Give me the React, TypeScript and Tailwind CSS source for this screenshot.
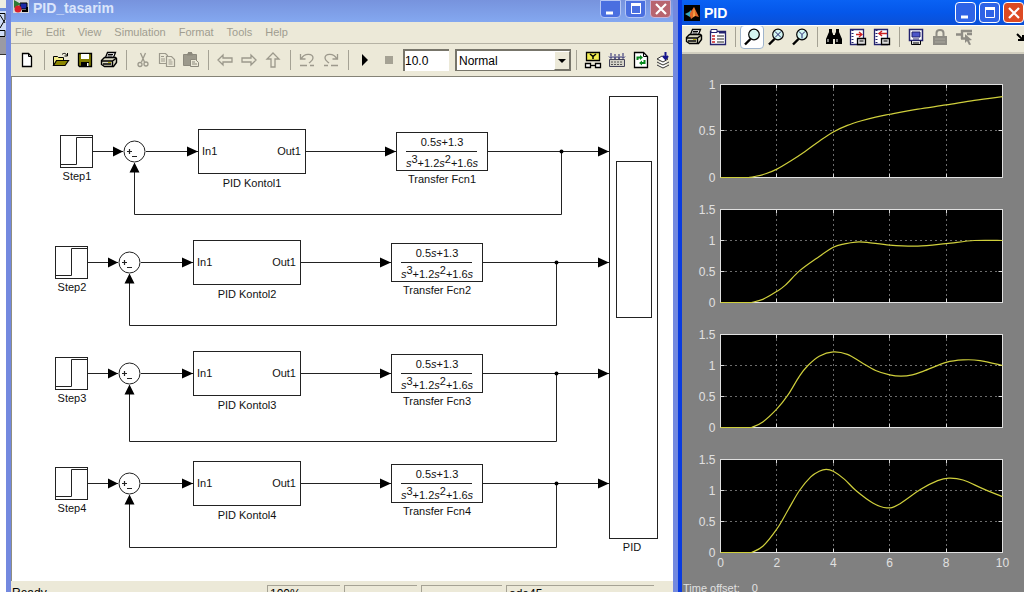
import React from "react";

type Point = [number, number];

interface ToolProps {
  label: string;
  active?: boolean;
  children: React.ReactNode;
}

interface LoopProps {
  n: number;
  x: number;
  y: number;
  back: number;
}

interface PlotProps {
  top: number;
  max: number;
  data: Point[];
  showTime?: boolean;
}

const menus = ["File", "Edit", "View", "Simulation", "Format", "Tools", "Help"];

// one entry for each feedback loop, back is the height of the return wire
const loops: LoopProps[] = [
  { n: 1, x: 5, y: 74.5, back: 137.5 },
  { n: 2, x: 0, y: 185.5, back: 248.5 },
  { n: 3, x: 0, y: 296.5, back: 364.5 },
  { n: 4, x: 0, y: 406.5, back: 470.5 },
];

const plots: PlotProps[] = [
  {
    top: 30.5,
    max: 1,
    data: [[0, 0], [1, 0], [1.2, 0.01], [1.6, 0.04], [2, 0.09], [2.5, 0.18], [3, 0.28], [3.5, 0.39], [4, 0.49], [4.5, 0.56], [5, 0.61], [5.5, 0.65], [6, 0.68], [7, 0.735], [8, 0.78], [9, 0.83], [10, 0.87]],
  },
  {
    top: 155.5,
    max: 1.5,
    data: [[0, 0], [1.1, 0], [1.5, 0.05], [2, 0.18], [2.3, 0.28], [2.8, 0.51], [3.4, 0.71], [4, 0.89], [4.4, 0.945], [4.8, 0.975], [5.2, 0.97], [6, 0.925], [7, 0.91], [8, 0.95], [9, 1], [10, 1]],
  },
  {
    top: 280.5,
    max: 1.5,
    data: [[0, 0], [1.1, 0], [1.5, 0.09], [2, 0.3], [2.4, 0.53], [2.8, 0.83], [3.1, 1], [3.5, 1.15], [4, 1.22], [4.5, 1.18], [5, 1.05], [5.5, 0.92], [6, 0.85], [6.4, 0.83], [6.8, 0.85], [7.2, 0.91], [8, 1.05], [8.6, 1.09], [9.2, 1.08], [10, 1]],
  },
  {
    top: 405.5,
    max: 1.5,
    data: [[0, 0], [1.1, 0], [1.5, 0.1], [2, 0.38], [2.4, 0.69], [2.8, 1], [3.2, 1.22], [3.5, 1.31], [3.75, 1.34], [4, 1.31], [4.4, 1.18], [4.8, 1], [5.4, 0.8], [5.9, 0.72], [6.3, 0.77], [7.1, 1.02], [7.7, 1.16], [8.1, 1.2], [8.6, 1.17], [9.3, 1.03], [10, 0.9]],
    showTime: true,
  },
];

const Tool: React.FC<ToolProps> = ({ label, active, children }) => (
  <button
    type="button"
    aria-label={label}
    className={`flex h-6 w-6 shrink-0 items-center justify-center ${
      active ? "rounded border border-[#9fb4cc] bg-white" : ""
    }`}
  >
    <svg viewBox="0 0 18 18" className="h-[18px] w-[18px] shrink-0" fill="none" stroke="#000">
      {children}
    </svg>
  </button>
);

const Separator = () => (
  <div className="flex w-2.5 shrink-0 justify-center">
    <div className="h-5 w-px bg-[#a5a294]" />
  </div>
);

const Printer = () => (
  <>
    <path d="M5.5 6.5 7.5 1.5h8l-2 5" fill="#fff" strokeWidth="1.3" />
    <path d="M8 3.5h5M7.5 5h5" />
    <path d="M1.5 9.5 4.5 6.5h11l1 1v4l-3 4h-9l-3-2z" fill="#d8d6c0" strokeWidth="1.4" />
    <path d="M1.5 10h11l4-3M12.5 10v5M3 13h8" strokeWidth="1.4" />
    <path d="M8 11.5h3" stroke="#b3a800" />
  </>
);

const Lens = () => (
  <>
    <path d="M7.5 11 2 16.5" strokeWidth="2.4" />
    <circle cx="11" cy="6.5" r="5.3" fill="#d3f5f0" strokeWidth="1.2" />
  </>
);

const WindowButtons = ({ dim }: { dim?: boolean }) => {
  const size = dim ? "h-[18px] rounded-b" : "h-[21px] rounded";
  const blue = dim ? "border-[#b4c6f5] bg-[#4a6fe0]" : "border-white bg-[#2e63e6]";
  const red = dim ? "border-[#c9b4d8] bg-[#b8646f]" : "border-white bg-[#dd4a23]";
  return (
    <div className={`ml-auto flex shrink-0 ${dim ? "gap-1 pr-0.5" : "gap-[3px]"}`}>
      <button type="button" aria-label="Minimize" className={`flex w-[21px] items-center justify-center border ${size} ${blue}`}>
        <svg viewBox="0 0 14 14" className="h-3.5 w-3.5"><path d="M2 11h7" stroke="#fff" strokeWidth="3" /></svg>
      </button>
      <button type="button" aria-label="Maximize" className={`flex w-[21px] items-center justify-center border ${size} ${blue}`}>
        <svg viewBox="0 0 14 14" className="h-3.5 w-3.5" fill="none" stroke="#fff"><path d="M2 2.5h10" strokeWidth="3" /><path d="M2.5 2v9.500h9V2" /></svg>
      </button>
      <button type="button" aria-label="Close" className={`flex w-[21px] items-center justify-center border ${size} ${red}`}>
        <svg viewBox="0 0 14 14" className="h-3.5 w-3.5" stroke="#fff" strokeWidth="2.2"><path d="M2 2l10 10M12 2 2 12" /></svg>
      </button>
    </div>
  );
};

const Loop: React.FC<LoopProps> = ({ n, x, y, back }) => (
  <g transform={`translate(${x} ${y})`}>
    {/* wires */}
    <path d="M76 0h30M129 0h52M289 0h90" stroke="#222" />
    <path d={`M471 0H${597 - x}M544.5 0V${back - y}H117.5V12`} stroke="#222" />
    <g fill="#000" stroke="none">
      <path d="M96 -5v10l10-5zM170 -5v10l11-5zM368 -5v10l11-5zM112.5 21h10l-5-10z" />
      <path d={`M${586 - x} -5v10l11-5z`} />
      <circle cx="544.5" cy="0" r="2" />
    </g>

    {/* step source */}
    <rect x="43.5" y="-16" width="32" height="32" />
    <path d="M44 13h15.500v-27H76" />

    {/* sum */}
    <circle cx="117.5" cy="0" r="10.5" />
    <path d="M110 0h5M112.5 -2.5v5M115 5h5" strokeWidth="1.2" />

    <rect x="181.5" y="-22" width="107" height="44" />
    <rect x="379.5" y="-19" width="91" height="38" />
    <path d="M389 0h71" />

    <g fill="#111" stroke="none">
      <text x="60" y="28" textAnchor="middle">Step{n}</text>
      <text x="185" y="3">In1</text>
      <text x="284" y="3" textAnchor="end">Out1</text>
      <text x="235" y="35" textAnchor="middle">PID Kontol{n}</text>
      <text x="425" y="-6" textAnchor="middle">
        0.5<tspan fontStyle="italic">s</tspan>+1.3
      </text>
      <text x="425" y="15" textAnchor="middle">
        <tspan fontStyle="italic">s</tspan><tspan dy="-4">3</tspan><tspan dy="4">+1.2</tspan><tspan fontStyle="italic">s</tspan><tspan dy="-4">2</tspan><tspan dy="4">+1.6</tspan><tspan fontStyle="italic">s</tspan>
      </text>
      <text x="425" y="31" textAnchor="middle">Transfer Fcn{n}</text>
    </g>
  </g>
);

const LEFT = 38.5;
const WIDTH = 282;
const HEIGHT = 93;

const curve = (data: Point[], max: number) => {
  const p = data.map(([t, v]) => [(t / 10) * WIDTH, HEIGHT - (v / max) * HEIGHT]);
  let d = `M${p[0][0]} ${p[0][1]}`;
  for (let i = 0; i < p.length - 1; i++) {
    const a = p[Math.max(i - 1, 0)];
    const b = p[i];
    const c = p[i + 1];
    const e = p[Math.min(i + 2, p.length - 1)];
    // the flat start would overshoot with the wide tangent, so keep it straight
    if (i === 0) {
      d += `L${c[0]} ${c[1]}`;
      continue;
    }
    const from = i === 1 ? b : a;
    d += `C${b[0] + (c[0] - from[0]) / 6} ${b[1] + (c[1] - from[1]) / 6} ${c[0] - (e[0] - b[0]) / 6} ${c[1] - (e[1] - b[1]) / 6} ${c[0]} ${c[1]}`;
  }
  return d;
};

const Plot: React.FC<PlotProps> = ({ top, max, data, showTime }) => {
  const levels = max === 1 ? [0, 0.5, 1] : [0, 0.5, 1, 1.5];
  return (
    <g transform={`translate(${LEFT} ${top})`}>
      <rect width={WIDTH} height={HEIGHT} fill="#000" />
      {[2, 4, 6, 8].map((t) => {
        const x = Math.round((t / 10) * WIDTH);
        return (
          <g key={t} stroke="#d8d8d8">
            <path d={`M${x} 0V${HEIGHT}`} strokeDasharray="1 4" />
            <path d={`M${x} 0v4M${x} ${HEIGHT}v-4`} />
          </g>
        );
      })}
      {levels.map((v) => {
        const y = HEIGHT - Math.round((v / max) * HEIGHT);
        return (
          <g key={v}>
            {v > 0 && v < max && (
              <g stroke="#d8d8d8">
                <path d={`M0 ${y}H${WIDTH}`} strokeDasharray="1 4" />
                <path d={`M0 ${y}h4M${WIDTH} ${y}h-4`} />
              </g>
            )}
            <text x="-5" y={y + 4} textAnchor="end">{v}</text>
          </g>
        );
      })}
      <rect width={WIDTH} height={HEIGHT} fill="none" stroke="#e0e0e0" />
      <path d={curve(data, max)} fill="none" stroke="#cfcf3c" strokeWidth="1.2" />
      {showTime &&
        [0, 2, 4, 6, 8, 10].map((t) => (
          <text key={t} x={(t / 10) * WIDTH} y={HEIGHT + 14} textAnchor="middle">{t}</text>
        ))}
    </g>
  );
};

const ModelWindow = () => (
  <section className="flex min-w-0 flex-1 flex-col border-x-[5px] border-[#7389df] bg-[#ece9d8]">
    <header className="flex h-[22px] shrink-0 items-start gap-1 bg-gradient-to-b from-[#7793dd] to-[#84a8f0]">
      <svg viewBox="0 0 16 16" className="ml-0.5 h-4 w-4 shrink-0">
        <path d="M0 0h16v13H0z" fill="#d8d8dc" />
        <path d="M7 3h7v6H7z" fill="#1b2aa8" stroke="#000" />
        <path d="M1 0l7 4-7 4z" fill="#2f7a35" />
        <circle cx="5" cy="9" r="3.5" fill="#d81f2a" />
        <path d="M9 11h5V7" fill="none" stroke="#000" strokeWidth="2" />
      </svg>
      <h1 className="text-sm leading-4 font-bold text-[#dbe5fb]">PID_tasarim</h1>
      <WindowButtons dim />
    </header>

    <nav className="flex h-[21px] shrink-0 items-center gap-[13px] pl-1 text-[11px] text-[#a09d90]">
      {menus.map((item) => (
        <button key={item} type="button">{item}</button>
      ))}
    </nav>

    <div className="flex h-[34px] shrink-0 items-center overflow-hidden border-t border-b border-t-[#b5b2a4] border-b-[#858377] pl-1">
      <Tool label="New"><path d="M4.5 2.5h6l3 3v10h-9z" fill="#fff" strokeWidth="1.3" /><path d="M10.5 2.5v3h3" /></Tool>
      <Separator />
      <Tool label="Open">
        <path d="M1.5 14.500v-9h4l1 1h5v3" fill="#f3ec8a" />
        <path d="M1.5 14.500l3-5h12l-3.500 5z" fill="#8c8600" strokeWidth="1.2" />
        <path d="M10 3.500c2-2 4-1 5 1M15.500 2v3h-3" />
      </Tool>
      <Tool label="Save">
        <path d="M2.5 2.5h13v13h-12l-1-1z" fill="#7f7b00" strokeWidth="1.3" />
        <path d="M5 3h8v5H5z" fill="#fff" stroke="none" />
        <path d="M5 11h8v5H5z" fill="#000" stroke="none" />
        <path d="M11 12h1.500v3H11z" fill="#fff" stroke="none" />
      </Tool>
      <Tool label="Print"><Printer /></Tool>
      <Separator />
      <Tool label="Cut">
        <g stroke="#9c998c" strokeWidth="1.3"><path d="M6.500 2l4 9M11.500 2l-4 9" /><circle cx="6" cy="13.5" r="2" /><circle cx="12" cy="13" r="2" /></g>
      </Tool>
      <Tool label="Copy">
        <g stroke="#9c998c" strokeWidth="1.2" fill="#ece9d8"><path d="M1.500 2.500h6l2 2v8h-8z" /><path d="M8.500 5.500h5l3 3v7h-8z" /><path d="M3 5.500h3M3 8h4M3 10h4M10.500 9h3M10.500 11h4M10.500 13h4" /></g>
      </Tool>
      <Tool label="Paste">
        <path d="M1.500 3.500h13v11h-13z" fill="#9c998c" stroke="#8c897d" /><path d="M5 3.500h6M6 2h4" stroke="#8c897d" strokeWidth="2" /><path d="M8.500 8.500h5l3 3v4h-8z" fill="#ece9d8" stroke="#8c897d" /><path d="M10 11h3M10 13h5" stroke="#8c897d" />
      </Tool>
      <Separator />
      <Tool label="Back"><path d="M2 9l5-5v3h9v4H7v3z" stroke="#9c998c" strokeWidth="1.3" /></Tool>
      <Tool label="Forward"><path d="M16 9l-5-5v3H2v4h9v3z" stroke="#9c998c" strokeWidth="1.3" /></Tool>
      <Tool label="Up"><path d="M9 2l6 6h-4v8H7V8H3z" stroke="#9c998c" strokeWidth="1.3" /></Tool>
      <Separator />
      <Tool label="Undo"><path d="M2.500 3v5h5M3 8c4-7 12-5 12-1 0 3-3 4-4 5M2 14.500h7M12 14.500h4" stroke="#9c998c" strokeWidth="1.3" /></Tool>
      <Tool label="Redo"><path d="M15.500 3v5h-5M15 8C11 1 3 3 3 7c0 3 3 4 4 5M2 14.500h4M9 14.500h7" stroke="#9c998c" strokeWidth="1.3" /></Tool>
      <Separator />
      <Tool label="Start simulation"><path d="M6 3v12l6-6z" fill="#000" stroke="none" /></Tool>
      <Tool label="Stop simulation"><path d="M5 5h8v8H5z" fill="#a5a294" stroke="none" /></Tool>
      <input
        aria-label="Simulation stop time"
        defaultValue="10.0"
        className="ml-0.5 h-[22px] w-[46px] shrink-0 border-t-2 border-l-2 border-[#77756a] bg-white text-xs text-black"
      />
      <div className="relative ml-1.5 w-[116px] shrink-0">
        <select aria-label="Simulation mode" className="block h-[22px] w-full appearance-none border-2 border-r border-b border-[#77756a] bg-white pl-0.5 text-xs text-black">
          <option>Normal</option>
          <option>Accelerator</option>
        </select>
        <span className="pointer-events-none absolute top-0.5 right-px flex h-[19px] w-4 items-center justify-center border border-t-white border-r-[#77756a] border-b-[#77756a] border-l-white bg-[#ece9d8]">
          <svg viewBox="0 0 8 4" className="h-1 w-2"><path d="M0 0h8L4 4z" /></svg>
        </span>
      </div>
      <Separator />
      <Tool label="Library browser">
        <path d="M2.500 1.500h13v8h-13z" fill="#f3ee52" strokeWidth="1.3" /><path d="M6 3l3 2.500L12 3M9 5.500V8" strokeWidth="1.5" /><path d="M1.500 12.500h5v4h-5zM11.500 12.500h5v4h-5z" fill="#fff" strokeWidth="1.3" /><path d="M6.500 14.500h5" strokeWidth="1.3" />
      </Tool>
      <Tool label="Build">
        <path d="M1.500 8.500h15v7h-15z" fill="#d4d2c8" stroke="#44435a" /><path d="M3 2v5M7 3v5M11 3v5M15 2v5M1 5.500l2 2 2-2M5 5.500l2 2 2-2 2 2 2-2M13 5.500l2 2 2-2" stroke="#25256e" /><path d="M3 11h12M3 13.500h12" stroke="#555" strokeDasharray="2 1" />
      </Tool>
      <Tool label="Refresh">
        <path d="M2.500 1.500h9l4 4v11h-13z" fill="#fff" strokeWidth="1.3" /><path d="M11.500 1.500v4h4" /><path d="M5.500 9V6.500h3M12.500 9v3h-3" stroke="#078a1e" strokeWidth="2" /><path d="M8 4l3 2.500L8 9zM10 9.500 7 12l3 2.500z" fill="#078a1e" stroke="none" />
      </Tool>
      <Tool label="Update diagram">
        <path d="M1 8l5-3 6 3-5 3zM1 11l6 3 6-3M1 14l6 3 6-3" fill="#fff" stroke="#333" /><path d="M9.500 1v6M7 5l2.500 3L12 5" stroke="#15158c" strokeWidth="2" />
      </Tool>
    </div>

    <main className="min-h-0 flex-1 overflow-hidden border-l border-[#8f8d80] bg-white">
      <svg viewBox="0 0 661 504" className="block w-full text-[11px]" fill="none" stroke="#222" role="img" aria-label="Block diagram with four PID loops">
        {loops.map((loop) => (
          <Loop key={loop.n} {...loop} />
        ))}
        {/* scope block */}
        <rect x="597.5" y="19.5" width="48" height="442" />
        <rect x="604.5" y="84.5" width="35" height="156" />
        <text x="620" y="474" textAnchor="middle" fill="#111" stroke="none">PID</text>
      </svg>
    </main>

    <footer className="flex h-[11px] shrink-0 items-start gap-1 overflow-hidden pt-1 pr-[19px] text-xs leading-4 text-black">
      <span className="flex-1 pl-px">Ready</span>
      <span className="h-5 w-[73px] border-t border-l border-[#a5a294] pl-0.5">100%</span>
      <span className="h-5 w-[73px] border-t border-l border-[#a5a294]" />
      <span className="h-5 w-[81px] border-t border-l border-[#a5a294]" />
      <span className="h-5 w-[148px] border-t border-l border-[#a5a294] pl-0.5">ode45</span>
    </footer>
  </section>
);

const ScopeWindow = () => (
  <section className="flex min-w-0 flex-1 flex-col border-l-4 border-[#0a3be0] bg-[#808080]">
    <header className="flex h-[25px] shrink-0 items-center gap-1 bg-gradient-to-b from-[#0a62f4] via-[#0557ea] to-[#0a4fd6]">
      <svg viewBox="0 0 16 16" className="ml-0.5 h-4 w-4 shrink-0">
        <path d="M0 0h16v16H0z" fill="#000" />
        <path d="M1 9l4-2 2-2 2 3-3 4z" fill="#3aa6bd" />
        <path d="M6 8l4-6 5 10-4-1-4 3-1-3z" fill="#e2672a" />
        <path d="M10 2l1 9-2 1z" fill="#f5b24c" />
      </svg>
      <h2 className="text-sm leading-5 font-bold text-white">PID</h2>
      <WindowButtons />
    </header>

    <div className="flex h-[29px] shrink-0 items-center overflow-hidden border-t border-b-2 border-t-white border-b-[#d2cfc0] bg-[#ece9d8] pb-1">
      <Tool label="Print"><Printer /></Tool>
      <Tool label="Parameters">
        <path d="M1.500 3.500h15v13h-15z" fill="#fff" stroke="#23236e" strokeWidth="1.3" /><path d="M2 1.500h6v3H2z" fill="#fff" stroke="#23236e" /><path d="M10 4.500h6" stroke="#23236e" strokeWidth="2" /><path d="M3 8h3M3 11h3M3 14h3" stroke="#c22" strokeWidth="1.5" /><path d="M8 8h7M8 11h7M8 14h7" stroke="#222" />
      </Tool>
      <Separator />
      <Tool label="Zoom" active><Lens /></Tool>
      <Tool label="Zoom X-axis"><Lens /><path d="M8 3.500l6 6M14 3.500l-6 6" stroke="#23236e" /></Tool>
      <Tool label="Zoom Y-axis"><Lens /><path d="M8 3.500l3 3 3-3M11 6.500v4" stroke="#23236e" /></Tool>
      <Separator />
      <Tool label="Autoscale">
        <g fill="#000" stroke="none"><path d="M4 1h3v3l1 2v10H1v-5l3-7zM11 1h3v3l3 7v5h-7V6l1-2z" /><path d="M7 7h4v4H7z" /></g><path d="M3 11v3M12 11v3" stroke="#fff" />
      </Tool>
      <Tool label="Save axes">
        <path d="M1.500 1.500h13v15h-13z" fill="#fff" stroke="#23236e" strokeWidth="1.3" /><path d="M3.500 2v14" stroke="#23236e" strokeDasharray="1 2" strokeWidth="2" /><path d="M7 6.500h5M10 4l3 2.500L10 9" stroke="#c22" strokeWidth="1.3" /><path d="M8.500 10.500h8v6h-8z" fill="#ddd" strokeWidth="1.3" /><path d="M10.500 13h4" />
      </Tool>
      <Tool label="Restore axes">
        <path d="M1.500 1.500h13v15h-13z" fill="#fff" stroke="#23236e" strokeWidth="1.3" /><path d="M3.500 2v14" stroke="#23236e" strokeDasharray="1 2" strokeWidth="2" /><path d="M14 5.500H6M9 3 6 5.500 9 8" stroke="#c22" strokeWidth="1.5" /><path d="M8.500 10.500h8v6h-8z" fill="#ddd" strokeWidth="1.3" /><path d="M10.500 13h4" />
      </Tool>
      <Separator />
      <Tool label="Floating scope">
        <path d="M2.500 1.500h13v11h-13z" fill="#fff" stroke="#23236e" strokeWidth="1.5" /><path d="M5 4h8v5H5z" fill="#4b55c8" stroke="#23236e" /><path d="M6 11h6" stroke="#23236e" /><path d="M4.500 13v3.500h9V13" fill="#ddd" /><path d="M6 15h6" />
      </Tool>
      <Tool label="Lock axes"><path d="M5.500 9V5c0-4 7-4 7 0v4" stroke="#8e8c84" strokeWidth="2" /><path d="M2 8h14v9H2z" fill="#8e8c84" stroke="none" /><path d="M4 11h10M4 14h10" stroke="#a8a69c" /></Tool>
      <Tool label="Signal selection">
        <path d="M1 6.500h5M6 3h11M6 10.500h5M7 2v9M12 6h5" stroke="#8e8c84" strokeWidth="2.4" /><path d="M10 6l7 6-3 .5 2 4-2 .5-2-4-2 2z" fill="#8e8c84" stroke="none" />
      </Tool>
      <svg viewBox="0 0 8 8" className="ml-auto h-2 w-2 shrink-0" fill="none" stroke="#000" strokeWidth="2">
        <path d="M1 1l5 5M7 2v5H2" />
      </svg>
    </div>

    <svg viewBox="0 0 342 528" className="block w-full shrink-0 text-xs" fill="#e0e0e0" role="img" aria-label="Step responses">
      {plots.map((plot) => (
        <Plot key={plot.top} {...plot} />
      ))}
    </svg>
    <p className="flex gap-3 pl-px text-[11px] leading-3 text-[#e0e0e0]">
      <span>Time offset:</span>
      <span>0</span>
    </p>
  </section>
);

const App: React.FC = () => {
  return (
    <div className="flex h-screen overflow-hidden bg-white font-['Liberation_Sans',Arial,sans-serif]">
      <div className="flex min-w-0 flex-[339]">
        {/* edge of the window behind */}
        <div className="flex w-1.5 shrink-0 flex-col bg-white">
          <div className="h-2 bg-[#f0eee2]" />
          <div className="h-[3px] bg-[#6f8edb]" />
          <svg viewBox="0 0 6 26" className="h-[26px] w-1.5" fill="none" stroke="#000">
            <path d="M0 0h6v26H0z" fill="#cfdcf6" stroke="none" />
            <path d="M0 2.500h5v6L0 17M0 4l5 8M0 19.500h5v6H0" />
          </svg>
          <div className="h-[18px] border-b border-[#333] bg-[#9a9aa4]" />
        </div>
        <ModelWindow />
      </div>
      <div className="flex min-w-0 flex-[173]">
        <ScopeWindow />
      </div>
    </div>
  );
};

export default App;
